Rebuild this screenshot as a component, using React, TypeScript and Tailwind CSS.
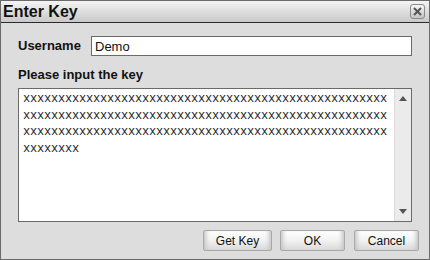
const keyText = "x".repeat(164)

function Arrow({ dir }: { dir: "up" | "down" }) {
  return (
    <svg width="8" height="5" viewBox="0 0 8 5" className="block">
      {dir === "up" ? <path d="M0 5 L4 0 L8 5 Z" fill="#555" /> : <path d="M0 0 L8 0 L4 5 Z" fill="#555" />}
    </svg>
  )
}

function Btn({ label, className }: { label: string; className: string }) {
  return (
    <button
      className={
        "h-[21px] rounded-[2px] border border-[#a8a8a8] bg-gradient-to-b from-[#ffffff] via-[#f2f2f2] to-[#d9d9d9] text-[12px] leading-none text-[#111] shadow-[inset_5px_0_4px_-3px_#c4c4c4,inset_-5px_0_4px_-3px_#c4c4c4] " +
        className
      }
    >
      {label}
    </button>
  )
}

export default function App() {
  return (
    <div className="w-[430px] h-[260px] flex flex-col bg-[#dddddd] border border-[#6a6a6a] font-['Liberation_Sans',Arial,sans-serif] text-[#111]">
      <div className="h-[22px] shrink-0 flex items-center justify-between pl-[2px] pr-[4px] border-b border-[#2a2a2a] bg-gradient-to-b from-[#f4f4f4] to-[#c9c9c9]">
        <span className="text-[16px] font-bold leading-none text-[#111]">Enter Key</span>
        <div className="w-[15px] h-[15px] flex items-center justify-center rounded-[3px] border border-[#8a8a8a] bg-gradient-to-b from-[#f6f6f6] to-[#c4c4c4]">
          <svg width="9" height="9" viewBox="0 0 9 9">
            <path d="M1 1 L8 8 M8 1 L1 8" stroke="#555" strokeWidth="2" />
          </svg>
        </div>
      </div>

      <div className="flex-1 flex flex-col px-[17px] pt-[13px]">
        <div className="flex items-center">
          <span className="w-[73px] text-[13px] font-bold">Username</span>
          <input
            value="Demo"
            readOnly
            className="w-[321px] h-[20px] border border-[#6a6a6a] bg-white px-[3px] text-[13px] outline-none"
          />
        </div>

        <div className="mt-[11px] text-[13px] font-bold leading-[15px]">Please input the key</div>

        <div className="mt-[6px] w-[394px] h-[134px] flex border border-[#6a6a6a] bg-white">
          <div className="flex-1 pl-[4px] pr-[3px] pt-[2px] font-['Liberation_Mono',monospace] text-[12px] tracking-[-0.2px] leading-[16.6px] break-all text-[#222] overflow-hidden">
            {keyText}
          </div>
          <div className="w-[17px] flex flex-col items-center justify-between py-[7px] bg-[#ebebeb] border-l border-[#dcdcdc]">
            <Arrow dir="up" />
            <Arrow dir="down" />
          </div>
        </div>

        <div className="mt-[8px] flex justify-end mr-[-7px]">
          <Btn label="Get Key" className="w-[69px]" />
          <Btn label="OK" className="w-[65px] ml-[8px]" />
          <Btn label="Cancel" className="w-[65px] ml-[9px]" />
        </div>
      </div>
    </div>
  )
}
